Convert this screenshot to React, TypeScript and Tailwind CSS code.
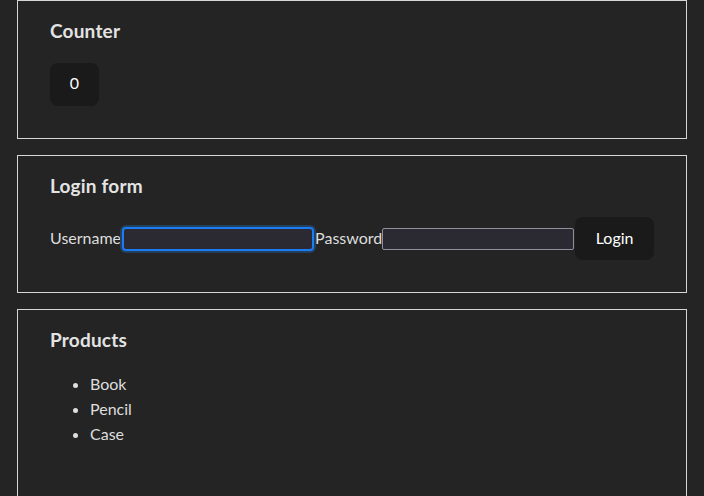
const font = "font-['Lato','Noto_Sans',sans-serif]";

function Card({ title, children }: { title: string; children: React.ReactNode }) {
  return (
    <section className="mx-[17px] mb-4 border border-[#d6d6d6] px-8 pt-[16px] pb-8">
      <h3 className="text-[19px] leading-[28px] font-bold tracking-[0.2px] text-[#e3e3e3]">{title}</h3>
      {children}
    </section>
  );
}

export default function App() {
  const products = ["Book", "Pencil", "Case"];
  return (
    <div className={`min-h-[496px] bg-[#242424] text-[16px] text-[#dedede] ${font}`}>
      <Card title="Counter">
        <button className="mt-[18px] h-[43px] w-[49px] rounded-lg bg-[#1a1a1a] pb-[3px] text-[16px] text-white">
          0
        </button>
      </Card>

      <Card title="Login form">
        <div className="mt-[17px] flex items-center">
          <label className="pb-[2px]">Username</label>
          <input
            type="text"
            className="mx-[2px] h-[22px] w-[190px] rounded-[3px] border border-[#1b7cf5] bg-[#2b2a33] shadow-[0_0_0_1px_#1b7cf5,0_0_0_3px_#23405e] outline-none"
          />
          <label className="pb-[2px]">Password</label>
          <input
            type="password"
            className="h-[22px] w-[192px] rounded-[2px] border border-[#8f8f9d] bg-[#2b2a33] outline-none"
          />
          <button className="ml-px h-[43px] w-[80px] rounded-lg bg-[#1a1a1a] pb-[2px] text-[16px] text-white">
            Login
          </button>
        </div>
      </Card>

      <Card title="Products">
        <ul className="mt-[17px] mb-[21px] list-disc pl-10 leading-[25px]">
          {products.map((p) => (
            <li key={p}>{p}</li>
          ))}
        </ul>
      </Card>
    </div>
  );
}
